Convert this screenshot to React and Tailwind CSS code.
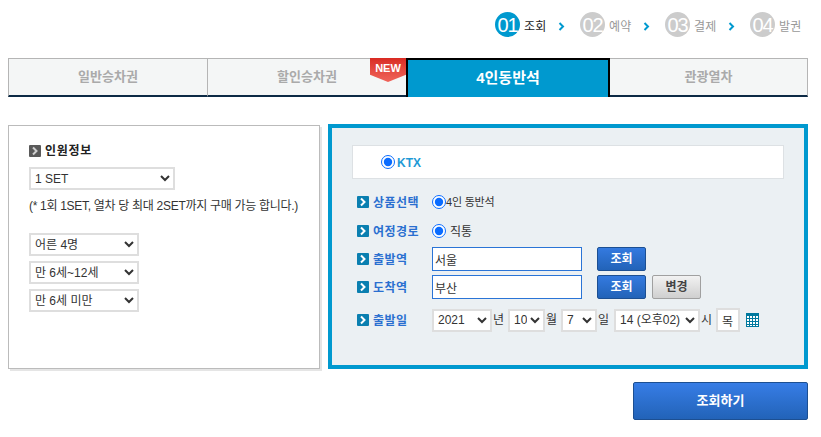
const steps = [
  { no: '01', label: '조회', on: true },
  { no: '02', label: '예약' },
  { no: '03', label: '결제' },
  { no: '04', label: '발권' },
];

function Chevron() {
  return (
    <svg width="7" height="9" viewBox="0 0 7 9" className="ml-[10px] mt-[3px] shrink-0">
      <path d="M1.5 1l3.5 3.5L1.5 8" fill="none" stroke="#0099cf" strokeWidth="2" />
    </svg>
  );
}

function Bullet({ gray }) {
  return (
    <svg width="12" height="12" viewBox="0 0 12 12" className="shrink-0">
      <rect width="12" height="12" rx="1" fill={gray ? '#5a5a5a' : '#0a7fb0'} />
      <path d="M4 2.5L7.5 6 4 9.5" fill="none" stroke={gray ? '#d0d0d0' : '#ffffff'} strokeWidth="2" />
    </svg>
  );
}

function Tab({ children, className = '' }) {
  return (
    <div className={`flex items-center justify-center border-t border-t-[#b5b5b5] border-b-2 border-b-[#0c2a45] bg-[#f4f6f6] text-[13px] font-bold text-[#aaaaaa] ${className}`}>
      {children}
    </div>
  );
}

function Select({ value, className = '' }) {
  return (
    <select defaultValue={value} className={`h-[23px] border-2 border-[#dedede] bg-white text-[12px] text-[#333333] ${className}`}>
      <option>{value}</option>
    </select>
  );
}

function Row({ label, className = '', children }) {
  return (
    <div className={`ml-[25px] flex h-6 items-center ${className}`}>
      <div className="flex w-[75px] shrink-0 items-center gap-1">
        <Bullet />
        <span className="pt-px text-[12px] font-bold tracking-[0.5px] text-[#2a6fd0]">{label}</span>
      </div>
      {children}
    </div>
  );
}

function BlueButton({ children }) {
  return (
    <button type="button" className="h-6 w-[49px] rounded-[2px] border border-[#1c4f92] bg-gradient-to-b from-[#347ae0] to-[#2263b8] text-[12px] font-bold text-white">
      {children}
    </button>
  );
}

export default function App() {
  return (
    <div className="h-[437px] w-[821px] overflow-hidden bg-white pl-2 pt-3 font-['Liberation_Sans','Noto_Sans_CJK_KR',sans-serif] text-[12px] text-[#333333]">
      <div className="flex h-[25px] w-[800px] justify-end pr-[5px]">
        {steps.map((s, i) => (
          <div key={s.no} className={`flex items-center ${i < 3 ? 'w-[85px]' : 'w-[53px]'}`}>
            <div className={`flex h-[25px] w-[25px] shrink-0 items-center justify-center rounded-full text-[20px] tracking-[-1px] text-white ${s.on ? 'bg-[#0099cf]' : 'bg-[#cccccc]'}`}>
              {s.no}
            </div>
            <span className={`ml-1 w-6 shrink-0 whitespace-nowrap pt-[5px] tracking-[0.3px] ${s.on ? 'text-[#222222]' : 'text-[#999999]'}`}>{s.label}</span>
            {i < 3 && <Chevron />}
          </div>
        ))}
      </div>

      <div className="relative mt-[21px] flex h-[39px] w-[800px]">
        <Tab className="w-[199px] border-l border-l-[#b5b5b5]">일반승차권</Tab>
        <Tab className="w-[199px] border-l border-l-[#b5b5b5]">할인승차권</Tab>
        <div className="flex w-[204px] items-center justify-center border-x-2 border-t-2 border-black bg-[#0099cf] text-[15px] font-bold text-white">
          4인동반석
        </div>
        <Tab className="w-[198px] border-r border-r-[#b5b5b5]">관광열차</Tab>
        <div className="absolute left-[362px] top-0 flex h-[24px] w-[36px] justify-center bg-gradient-to-b from-[#d92a22] to-[#f0645a] pt-[3px] text-[11px] font-bold leading-[14px] text-white [clip-path:polygon(0_0,100%_0,100%_70%,50%_100%,0_70%)]">
          NEW
        </div>
      </div>

      <div className="mt-[27px] flex w-[800px] items-start gap-2">
        <div className="mt-px h-[244px] w-[312px] border border-[#bbbbbb] pl-5 pt-[19px] shadow-[2px_2px_0_#e5e5e5]">
          <div className="flex h-3 items-center gap-1">
            <Bullet gray />
            <span className="text-[12px] font-bold tracking-[0.7px] text-[#222222]">인원정보</span>
          </div>
          <Select value="1 SET" className="mt-[10px] block w-[146px]" />
          <p className="mt-2 whitespace-nowrap text-[12px] leading-[16px] tracking-[-0.3px] text-[#333333]">(* 1회 1SET, 열차 당 최대 2SET까지 구매 가능 합니다.)</p>
          <div className="mt-[19px] flex flex-col gap-[5px]">
            <Select value="어른 4명" className="block w-[110px]" />
            <Select value="만 6세~12세" className="block w-[110px]" />
            <Select value="만 6세 미만" className="block w-[110px]" />
          </div>
        </div>

        <div className="h-[245px] w-[480px] border-4 border-[#0099cf] bg-[#ebf0f3] pt-[17px]">
          <div className="ml-5 flex h-[34px] w-[432px] items-center border border-[#dde1e4] bg-white pl-[28px]">
            <input type="radio" defaultChecked readOnly className="m-0 h-[14px] w-[14px] accent-[#0a6cff]" />
            <span className="ml-[2px] pt-px text-[12px] font-bold text-[#1f9ad6]">KTX</span>
          </div>

          <Row label="상품선택" className="mt-[11px]">
            <input type="radio" defaultChecked readOnly className="m-0 h-[14px] w-[14px] accent-[#0a6cff]" />
            <span className="whitespace-nowrap text-[11px] tracking-[-0.2px]">4인 동반석</span>
          </Row>
          <Row label="여정경로" className="mt-[5px]">
            <input type="radio" defaultChecked readOnly className="m-0 h-[14px] w-[14px] accent-[#0a6cff]" />
            <span className="ml-1 pt-px">직통</span>
          </Row>
          <Row label="출발역" className="mt-1">
            <input defaultValue="서울" className="h-6 w-[150px] border border-[#2a74d6] bg-white px-[2px] text-[12px]" />
            <div className="ml-[15px]"><BlueButton>조회</BlueButton></div>
          </Row>
          <Row label="도착역" className="mt-1">
            <input defaultValue="부산" className="h-6 w-[150px] border border-[#2a74d6] bg-white px-[2px] text-[12px]" />
            <div className="ml-[15px]"><BlueButton>조회</BlueButton></div>
            <button type="button" className="ml-[6px] h-6 w-[49px] rounded-[2px] border border-[#a0a0a0] bg-gradient-to-b from-[#f2f2f2] to-[#cfcfcf] text-[12px] font-bold text-[#444444]">
              변경
            </button>
          </Row>
          <Row label="출발일" className="mt-[9px]">
            <Select value="2021" className="w-[60px]" />
            <span className="ml-[1px] w-[15px]">년</span>
            <Select value="10" className="w-[37px]" />
            <span className="ml-[1px] w-[15px]">월</span>
            <Select value="7" className="w-[36px]" />
            <span className="ml-[1px] w-4">일</span>
            <Select value="14 (오후02)" className="w-[86px]" />
            <span className="ml-[1px] w-[15px]">시</span>
            <input defaultValue="목" className="h-6 w-6 border-2 border-[#dedede] bg-white px-1 text-[12px]" />
            <svg width="13" height="14" viewBox="0 0 13 14" className="ml-[6px]">
              <rect width="13" height="14" fill="#00799e" />
              <path d="M1 3h2v2H1zM4 3h2v2H4zM7 3h2v2H7zM10 3h2v2h-2zM1 6h2v2H1zM4 6h2v2H4zM7 6h2v2H7zM10 6h2v2h-2zM1 9h2v2H1zM4 9h2v2H4zM7 9h2v2H7zM10 9h2v2h-2zM1 12h2v1H1zM4 12h2v1H4zM7 12h2v1H7zM10 12h2v1h-2z" fill="#ffffff" />
            </svg>
          </Row>
        </div>
      </div>

      <div className="mt-[13px] flex w-[800px] justify-end">
        <button type="button" className="h-[38px] w-[175px] rounded-[2px] border border-[#1c4f92] bg-gradient-to-b from-[#377de6] to-[#2263b8] text-[13px] font-bold text-white">
          조회하기
        </button>
      </div>
    </div>
  );
}
